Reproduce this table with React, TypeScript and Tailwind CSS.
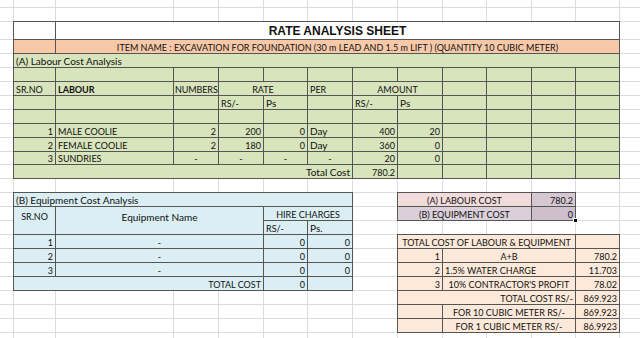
import type { ReactNode } from 'react';
import clsx from 'clsx';

// one spreadsheet cell: text sits on a thin right/bottom rule like Excel draws it
function Cell({ className, children }: { className: string; children?: ReactNode }) {
  return (
    <div
      className={clsx(
        'flex items-center overflow-hidden whitespace-nowrap border-r border-b border-[#555] px-[2px] pt-px leading-none',
        className,
      )}
    >
      {children}
    </div>
  );
}

const FILLERS = Array.from({ length: 350 }, (_, i) => i);

export default function App() {
  return (
    <div className="h-[338px] w-[640px] overflow-hidden bg-white text-[9px] text-[#111] [font-family:Lato,'Liberation_Sans',sans-serif]">
      <div className="grid grid-cols-[14px_42px_118px_45px_45px_44px_45px_45px_45px_44px_45px_44px_44px_44px] grid-rows-[8px_14px_18px_repeat(8,14px)_13px_repeat(13,14px)]">
        {FILLERS.map((i) => (
          <div key={i} className="border-r border-b border-[#dcdcdc]" />
        ))}

        {/* ---------- title + item name ---------- */}
        <Cell className="col-start-2 row-start-3 -ml-px -mt-px border-l border-t bg-white" />
        <Cell className="col-start-3 col-span-11 row-start-3 -mt-px justify-center border-t bg-white text-[12px] font-bold [font-family:'Liberation_Sans',Arial,sans-serif]">
          RATE ANALYSIS SHEET
        </Cell>
        <Cell className="col-start-2 row-start-4 -ml-px border-l bg-[#f8c9a8]" />
        <Cell className="col-start-3 col-span-11 row-start-4 justify-center bg-[#f8c9a8]">
          ITEM NAME : EXCAVATION FOR FOUNDATION (30 m LEAD AND 1.5 m LIFT ) (QUANTITY 10 CUBIC METER)
        </Cell>

        {/* ---------- (A) labour ---------- */}
        <Cell className="col-start-2 col-span-12 row-start-5 -ml-px border-l bg-[#d8e4bc] text-[10px]">(A) Labour Cost Analysis</Cell>

        <Cell className="col-start-2 row-start-6 -ml-px border-l bg-[#d8e4bc]" />
        <Cell className="col-start-3 row-start-6 bg-[#d8e4bc]" />
        <Cell className="col-start-4 row-start-6 bg-[#d8e4bc]" />
        <Cell className="col-start-5 row-start-6 bg-[#d8e4bc]" />
        <Cell className="col-start-6 row-start-6 bg-[#d8e4bc]" />
        <Cell className="col-start-7 row-start-6 bg-[#d8e4bc]" />
        <Cell className="col-start-8 row-start-6 bg-[#d8e4bc]" />
        <Cell className="col-start-9 row-start-6 bg-[#d8e4bc]" />
        <Cell className="col-start-10 row-start-6 bg-[#d8e4bc]" />
        <Cell className="col-start-11 row-start-6 bg-[#d8e4bc]" />
        <Cell className="col-start-12 row-start-6 bg-[#d8e4bc]" />
        <Cell className="col-start-13 row-start-6 bg-[#d8e4bc]" />

        <Cell className="col-start-2 row-start-7 -ml-px border-l bg-[#d8e4bc]">SR.NO</Cell>
        <Cell className="col-start-3 row-start-7 bg-[#d8e4bc] font-bold">LABOUR</Cell>
        <Cell className="col-start-4 row-start-7 bg-[#d8e4bc] px-px tracking-[-0.1px]">NUMBERS</Cell>
        <Cell className="col-start-5 col-span-2 row-start-7 justify-center bg-[#d8e4bc]">RATE</Cell>
        <Cell className="col-start-7 row-start-7 bg-[#d8e4bc]">PER</Cell>
        <Cell className="col-start-8 col-span-2 row-start-7 justify-center bg-[#d8e4bc]">AMOUNT</Cell>
        <Cell className="col-start-10 row-start-7 bg-[#d8e4bc]" />
        <Cell className="col-start-11 row-start-7 bg-[#d8e4bc]" />
        <Cell className="col-start-12 row-start-7 bg-[#d8e4bc]" />
        <Cell className="col-start-13 row-start-7 bg-[#d8e4bc]" />

        <Cell className="col-start-2 row-start-8 -ml-px border-l bg-[#d8e4bc]" />
        <Cell className="col-start-3 row-start-8 bg-[#d8e4bc]" />
        <Cell className="col-start-4 row-start-8 bg-[#d8e4bc]" />
        <Cell className="col-start-5 row-start-8 bg-[#d8e4bc]">RS/-</Cell>
        <Cell className="col-start-6 row-start-8 bg-[#d8e4bc] text-[10px]">Ps</Cell>
        <Cell className="col-start-7 row-start-8 bg-[#d8e4bc]" />
        <Cell className="col-start-8 row-start-8 bg-[#d8e4bc]">RS/-</Cell>
        <Cell className="col-start-9 row-start-8 bg-[#d8e4bc] text-[10px]">Ps</Cell>
        <Cell className="col-start-10 row-start-8 bg-[#d8e4bc]" />
        <Cell className="col-start-11 row-start-8 bg-[#d8e4bc]" />
        <Cell className="col-start-12 row-start-8 bg-[#d8e4bc]" />
        <Cell className="col-start-13 row-start-8 bg-[#d8e4bc]" />

        <Cell className="col-start-2 row-start-9 -ml-px border-l bg-[#d8e4bc]" />
        <Cell className="col-start-3 row-start-9 bg-[#d8e4bc]" />
        <Cell className="col-start-4 row-start-9 bg-[#d8e4bc]" />
        <Cell className="col-start-5 row-start-9 bg-[#d8e4bc]" />
        <Cell className="col-start-6 row-start-9 bg-[#d8e4bc]" />
        <Cell className="col-start-7 row-start-9 bg-[#d8e4bc]" />
        <Cell className="col-start-8 row-start-9 bg-[#d8e4bc]" />
        <Cell className="col-start-9 row-start-9 bg-[#d8e4bc]" />
        <Cell className="col-start-10 row-start-9 bg-[#d8e4bc]" />
        <Cell className="col-start-11 row-start-9 bg-[#d8e4bc]" />
        <Cell className="col-start-12 row-start-9 bg-[#d8e4bc]" />
        <Cell className="col-start-13 row-start-9 bg-[#d8e4bc]" />

        <Cell className="col-start-2 row-start-10 -ml-px justify-end border-l bg-[#d8e4bc]">1</Cell>
        <Cell className="col-start-3 row-start-10 bg-[#d8e4bc]">MALE COOLIE</Cell>
        <Cell className="col-start-4 row-start-10 justify-end bg-[#d8e4bc]">2</Cell>
        <Cell className="col-start-5 row-start-10 justify-end bg-[#d8e4bc]">200</Cell>
        <Cell className="col-start-6 row-start-10 justify-end bg-[#d8e4bc]">0</Cell>
        <Cell className="col-start-7 row-start-10 bg-[#d8e4bc] text-[10px]">Day</Cell>
        <Cell className="col-start-8 row-start-10 justify-end bg-[#d8e4bc]">400</Cell>
        <Cell className="col-start-9 row-start-10 justify-end bg-[#d8e4bc]">20</Cell>
        <Cell className="col-start-10 row-start-10 bg-[#d8e4bc]" />
        <Cell className="col-start-11 row-start-10 bg-[#d8e4bc]" />
        <Cell className="col-start-12 row-start-10 bg-[#d8e4bc]" />
        <Cell className="col-start-13 row-start-10 bg-[#d8e4bc]" />

        <Cell className="col-start-2 row-start-11 -ml-px justify-end border-l bg-[#d8e4bc]">2</Cell>
        <Cell className="col-start-3 row-start-11 bg-[#d8e4bc]">FEMALE COOLIE</Cell>
        <Cell className="col-start-4 row-start-11 justify-end bg-[#d8e4bc]">2</Cell>
        <Cell className="col-start-5 row-start-11 justify-end bg-[#d8e4bc]">180</Cell>
        <Cell className="col-start-6 row-start-11 justify-end bg-[#d8e4bc]">0</Cell>
        <Cell className="col-start-7 row-start-11 bg-[#d8e4bc] text-[10px]">Day</Cell>
        <Cell className="col-start-8 row-start-11 justify-end bg-[#d8e4bc]">360</Cell>
        <Cell className="col-start-9 row-start-11 justify-end bg-[#d8e4bc]">0</Cell>
        <Cell className="col-start-10 row-start-11 bg-[#d8e4bc]" />
        <Cell className="col-start-11 row-start-11 bg-[#d8e4bc]" />
        <Cell className="col-start-12 row-start-11 bg-[#d8e4bc]" />
        <Cell className="col-start-13 row-start-11 bg-[#d8e4bc]" />

        <Cell className="col-start-2 row-start-12 -ml-px justify-end border-l bg-[#d8e4bc]">3</Cell>
        <Cell className="col-start-3 row-start-12 bg-[#d8e4bc]">SUNDRIES</Cell>
        <Cell className="col-start-4 row-start-12 justify-center bg-[#d8e4bc]">-</Cell>
        <Cell className="col-start-5 row-start-12 justify-center bg-[#d8e4bc]">-</Cell>
        <Cell className="col-start-6 row-start-12 justify-center bg-[#d8e4bc]">-</Cell>
        <Cell className="col-start-7 row-start-12 justify-center bg-[#d8e4bc]">-</Cell>
        <Cell className="col-start-8 row-start-12 justify-end bg-[#d8e4bc]">20</Cell>
        <Cell className="col-start-9 row-start-12 justify-end bg-[#d8e4bc]">0</Cell>
        <Cell className="col-start-10 row-start-12 bg-[#d8e4bc]" />
        <Cell className="col-start-11 row-start-12 bg-[#d8e4bc]" />
        <Cell className="col-start-12 row-start-12 bg-[#d8e4bc]" />
        <Cell className="col-start-13 row-start-12 bg-[#d8e4bc]" />

        <Cell className="col-start-2 col-span-6 row-start-13 -ml-px justify-end border-l bg-[#d8e4bc] text-[10px]">Total Cost</Cell>
        <Cell className="col-start-8 row-start-13 justify-end bg-[#d8e4bc]">780.2</Cell>
        <Cell className="col-start-9 row-start-13 bg-[#d8e4bc]" />
        <Cell className="col-start-10 row-start-13 bg-[#d8e4bc]" />
        <Cell className="col-start-11 row-start-13 bg-[#d8e4bc]" />
        <Cell className="col-start-12 row-start-13 bg-[#d8e4bc]" />
        <Cell className="col-start-13 row-start-13 bg-[#d8e4bc]" />

        {/* ---------- (B) equipment ---------- */}
        <Cell className="col-start-2 col-span-6 row-start-15 -ml-px -mt-px border-l border-t bg-[#daeef3] text-[10px]">(B) Equipment Cost Analysis</Cell>
        <Cell className="col-start-2 row-start-16 row-span-2 -ml-px justify-center border-l bg-[#daeef3] pb-[9px]">SR.NO</Cell>
        <Cell className="col-start-3 col-span-3 row-start-16 row-span-2 justify-center bg-[#daeef3] pb-[9px] text-[10px]">Equipment Name</Cell>
        <Cell className="col-start-6 col-span-2 row-start-16 justify-center bg-[#daeef3]">HIRE CHARGES</Cell>
        <Cell className="col-start-6 row-start-17 bg-[#daeef3]">RS/-</Cell>
        <Cell className="col-start-7 row-start-17 bg-[#daeef3] text-[10px]">Ps.</Cell>

        <Cell className="col-start-2 row-start-18 -ml-px justify-end border-l bg-[#daeef3]">1</Cell>
        <Cell className="col-start-3 col-span-3 row-start-18 justify-center bg-[#daeef3]">-</Cell>
        <Cell className="col-start-6 row-start-18 justify-end bg-[#daeef3]">0</Cell>
        <Cell className="col-start-7 row-start-18 justify-end bg-[#daeef3]">0</Cell>
        <Cell className="col-start-2 row-start-19 -ml-px justify-end border-l bg-[#daeef3]">2</Cell>
        <Cell className="col-start-3 col-span-3 row-start-19 justify-center bg-[#daeef3]">-</Cell>
        <Cell className="col-start-6 row-start-19 justify-end bg-[#daeef3]">0</Cell>
        <Cell className="col-start-7 row-start-19 justify-end bg-[#daeef3]">0</Cell>
        <Cell className="col-start-2 row-start-20 -ml-px justify-end border-l bg-[#daeef3]">3</Cell>
        <Cell className="col-start-3 col-span-3 row-start-20 justify-center bg-[#daeef3]">-</Cell>
        <Cell className="col-start-6 row-start-20 justify-end bg-[#daeef3]">0</Cell>
        <Cell className="col-start-7 row-start-20 justify-end bg-[#daeef3]">0</Cell>
        <Cell className="col-start-2 col-span-4 row-start-21 -ml-px justify-end border-l bg-[#daeef3]">TOTAL COST</Cell>
        <Cell className="col-start-6 row-start-21 justify-end bg-[#daeef3]">0</Cell>
        <Cell className="col-start-7 row-start-21 bg-[#daeef3]" />

        {/* ---------- summary boxes ---------- */}
        <Cell className="col-start-9 col-span-3 row-start-15 -ml-px -mt-px justify-center border-l border-t border-[#7a7a7a] bg-[#f2dcdb]">(A) LABOUR COST</Cell>
        <Cell className="col-start-12 row-start-15 -mt-px justify-end border-t border-[#7a7a7a] bg-[#d6c8d2]">780.2</Cell>
        <Cell className="col-start-9 col-span-3 row-start-16 -ml-px justify-center border-l border-[#7a7a7a] bg-[#dbd0d9]">(B) EQUIPMENT COST</Cell>
        <div className="relative col-start-12 row-start-16 flex items-center justify-end overflow-visible border-r border-b border-[#555] bg-[#cdbfcc] px-[2px] pt-px leading-none">
          0
          <span className="absolute -bottom-[3px] -right-[3px] h-[5px] w-[5px] border border-white bg-black" />
        </div>

        <Cell className="col-start-9 col-span-4 row-start-18 -ml-px -mt-px justify-center border-l border-t bg-[#fde9d9]">TOTAL COST OF LABOUR &amp; EQUIPMENT</Cell>
        <Cell className="col-start-13 row-start-18 -mt-px border-t bg-[#fde9d9]" />
        <Cell className="col-start-9 row-start-19 -ml-px justify-end border-l bg-[#fde9d9]">1</Cell>
        <Cell className="col-start-10 col-span-3 row-start-19 justify-center bg-[#fde9d9]">A+B</Cell>
        <Cell className="col-start-13 row-start-19 justify-end bg-[#fde9d9]">780.2</Cell>
        <Cell className="col-start-9 row-start-20 -ml-px justify-end border-l bg-[#fde9d9]">2</Cell>
        <Cell className="col-start-10 col-span-3 row-start-20 bg-[#fde9d9]">1.5% WATER CHARGE</Cell>
        <Cell className="col-start-13 row-start-20 justify-end bg-[#fde9d9]">11.703</Cell>
        <Cell className="col-start-9 row-start-21 -ml-px justify-end border-l bg-[#fde9d9]">3</Cell>
        <Cell className="col-start-10 col-span-3 row-start-21 justify-center bg-[#fde9d9]">10% CONTRACTOR'S PROFIT</Cell>
        <Cell className="col-start-13 row-start-21 justify-end bg-[#fde9d9]">78.02</Cell>
        <Cell className="col-start-9 col-span-4 row-start-22 -ml-px justify-end border-l bg-[#fde9d9]">TOTAL COST RS/-</Cell>
        <Cell className="col-start-13 row-start-22 justify-end bg-[#fde9d9]">869.923</Cell>
        <Cell className="col-start-9 row-start-23 -ml-px border-l bg-[#fde9d9]" />
        <Cell className="col-start-10 col-span-3 row-start-23 justify-center bg-[#fde9d9]">FOR 10 CUBIC METER RS/-</Cell>
        <Cell className="col-start-13 row-start-23 justify-end bg-[#fde9d9]">869.923</Cell>
        <Cell className="col-start-9 row-start-24 -ml-px border-l bg-[#fde9d9]" />
        <Cell className="col-start-10 col-span-3 row-start-24 justify-center bg-[#fde9d9]">FOR 1 CUBIC METER RS/-</Cell>
        <Cell className="col-start-13 row-start-24 justify-end bg-[#fde9d9]">86.9923</Cell>
      </div>
    </div>
  );
}
